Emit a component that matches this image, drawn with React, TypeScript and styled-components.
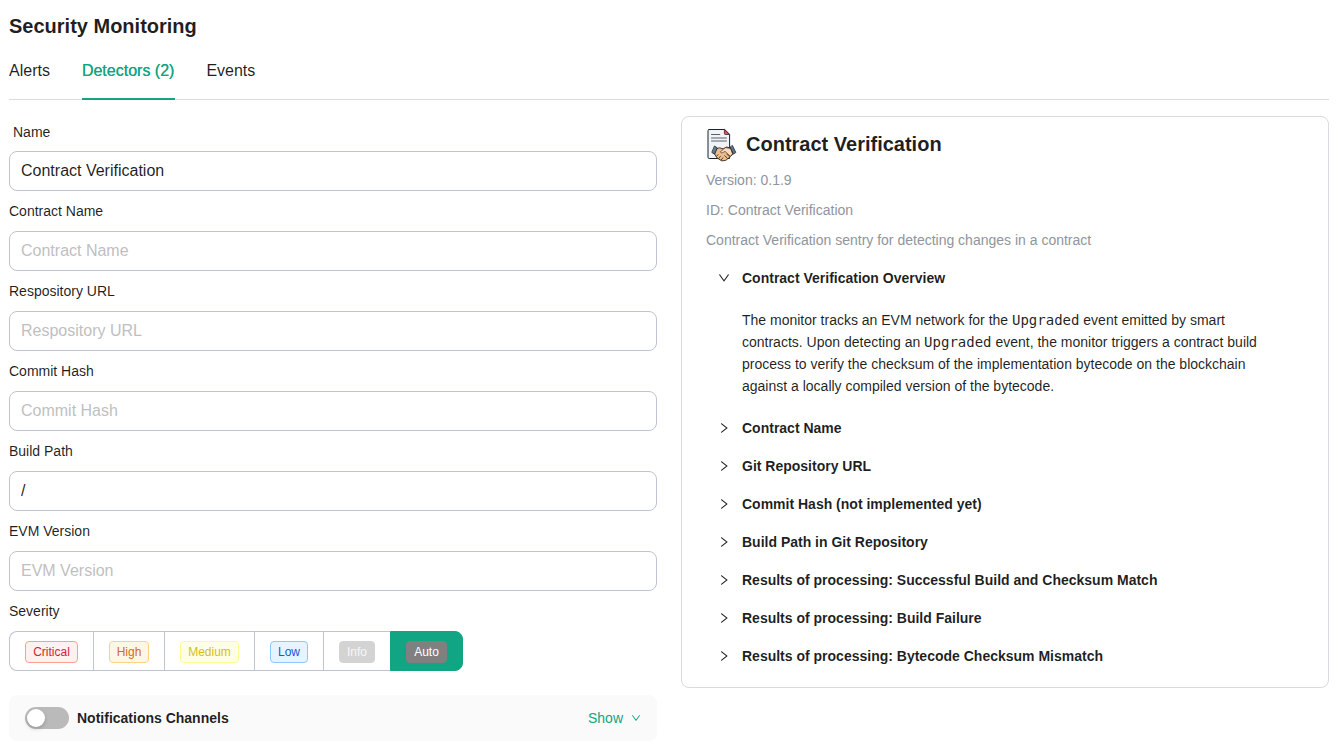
import React, { useState } from "react";
import styled, { createGlobalStyle, css } from "styled-components";

const GlobalStyle = createGlobalStyle`
  *, *::before, *::after { box-sizing: border-box; }
  body {
    margin: 0;
    background: #fff;
    color: rgba(0, 0, 0, 0.88);
    font: 14px/22px "Liberation Sans", Arial, sans-serif;
    overflow: hidden;
  }
  button, input { font-family: inherit; }
`;

const Page = styled.main`
  width: 1340px;
  height: 744px;
  padding: 12px 11px 0 9px;
  overflow: hidden;
`;

const PageTitle = styled.h1`
  margin: 0;
  font-size: 20px;
  line-height: 28px;
  font-weight: 700;
`;

const Tabs = styled.nav`
  display: flex;
  gap: 32px;
  height: 60px;
  margin-bottom: 16px;
  border-bottom: 1px solid #dcdce0;
`;

const Tab = styled.button<{ $active?: boolean }>`
  height: 60px;
  padding: 4px 0 0;
  border: 0;
  border-bottom: 2px solid transparent;
  background: none;
  color: inherit;
  font-size: 16px;
  line-height: 24px;
  ${(p) => p.$active && css`
    padding-right: 0.6px;
    margin-right: -0.6px;
    border-bottom-color: #12a583;
    color: #12a583;
    text-shadow: 0 0 0.25px currentColor;
  `}
`;

const Columns = styled.div`
  display: grid;
  grid-template-columns: 648px 648px;
  gap: 24px;
  align-items: start;
`;

const Form = styled.form`
  display: flex;
  flex-direction: column;
`;

const Label = styled.label<{ $first?: boolean }>`
  height: ${(p) => (p.$first ? "35px" : "40px")};
  padding: ${(p) => (p.$first ? "5px 4px 0" : "9px 0 0")};
`;

const Input = styled.input`
  width: 100%;
  height: 40px;
  padding: 0 11px;
  border: 1px solid #bfc4d4;
  border-radius: 8px;
  background: #fff;
  color: rgba(0, 0, 0, 0.88);
  font-size: 16px;
  outline: none;
  &::placeholder { color: #bfbfbf; opacity: 1; }
`;

const Segments = styled.div`
  display: flex;
  align-self: flex-start;
  height: 40px;
`;

const Segment = styled.button<{ $active?: boolean }>`
  display: flex;
  align-items: center;
  height: 40px;
  padding: 2px 15px 0;
  border: 1px solid #bfc4d4;
  border-right-width: 0;
  background: #fff;
  &:first-child { border-radius: 8px 0 0 8px; }
  &:last-child { border-radius: 0 8px 8px 0; border-right-width: 1px; }
  ${(p) => p.$active && css`
    background: #12a583;
    border-color: #12a583;
  `}
`;

type Tone = { color: string; bg: string; line: string; width: number };

const Tag = styled.span<{ $tone: Tone }>`
  width: ${(p) => p.$tone.width}px;
  height: 22px;
  border: 1px solid ${(p) => p.$tone.line};
  border-radius: 4px;
  background: ${(p) => p.$tone.bg};
  color: ${(p) => p.$tone.color};
  font-size: 12px;
  line-height: 20px;
  text-align: center;
  white-space: nowrap;
`;

const ChannelsBar = styled.section`
  display: flex;
  align-items: center;
  height: 46px;
  margin-top: 24px;
  padding: 0 16px;
  border-radius: 8px;
  background: #fafafa;
`;

const Switch = styled.button`
  display: flex;
  width: 44px;
  height: 22px;
  padding: 2px;
  border: 0;
  border-radius: 11px;
  background: #bababa;
`;

const Knob = styled.span`
  width: 18px;
  height: 18px;
  border-radius: 50%;
  background: #fff;
  box-shadow: 0 2px 4px rgba(0, 35, 11, 0.2);
`;

const ChannelsTitle = styled.strong`
  flex: 1;
  margin-left: 8px;
`;

const ShowLink = styled.button`
  display: flex;
  align-items: center;
  gap: 8px;
  padding: 0;
  border: 0;
  background: none;
  color: #12a583;
  font-size: 14px;
  line-height: 22px;
`;

const Card = styled.aside`
  height: 572px;
  padding: 11px 24px;
  border: 1px solid #d9dae3;
  border-radius: 8px;
`;

const CardHeader = styled.header`
  display: flex;
  align-items: center;
  gap: 8px;
  height: 32px;
  margin-bottom: 9px;
`;

const CardTitle = styled.h2`
  margin: 0;
  font-size: 20px;
  line-height: 28px;
`;

const Meta = styled.p`
  margin: 0 0 8px;
  color: #8f959e;
`;

const Accordion = styled.div`
  display: flex;
  flex-direction: column;
`;

const AccordionHeader = styled.button`
  display: flex;
  align-items: center;
  gap: 12px;
  height: 38px;
  padding: 0 12px;
  border: 0;
  background: none;
  color: inherit;
  font-size: 14px;
  font-weight: 700;
  line-height: 22px;
  text-align: left;
`;

const AccordionBody = styled.p`
  margin: 0;
  padding: 12px 36px 12px 36px;
  height: 112px;
`;

const Code = styled.code`
  font-family: "DejaVu Sans Mono", monospace;
  font-size: 14px;
  line-height: 1;
`;

const Icon = styled.svg<{ $size: number }>`
  flex: none;
  width: ${(p) => p.$size}px;
  height: ${(p) => p.$size}px;
  fill: currentColor;
`;

const DownIcon = ({ size = 12 }: { size?: number }) => (
  <Icon $size={size} viewBox="64 64 896 896">
    <path d="M884 256h-75c-5.1 0-9.9 2.5-12.9 6.6L512 654.2 227.9 262.6c-3-4.1-7.8-6.6-12.9-6.6h-75c-6.5 0-10.3 7.4-6.5 12.7l352.6 486.1c12.8 17.6 39 17.6 51.7 0l352.6-486.1c3.9-5.3.1-12.7-6.4-12.7z" />
  </Icon>
);

const RightIcon = () => (
  <Icon $size={12} viewBox="64 64 896 896">
    <path d="M765.7 486.8L314.9 134.7A7.97 7.97 0 00302 141v77.3c0 4.9 2.3 9.6 6.1 12l360 281.1-360 281.1c-3.9 3-6.1 7.7-6.1 12V883c0 6.7 7.7 10.4 12.9 6.3l450.8-352.1a31.96 31.96 0 000-50.4z" />
  </Icon>
);

const ContractSvg = styled.svg`
  flex: none;
  width: 32px;
  height: 32px;
  overflow: visible;
  stroke-linejoin: round;
  stroke-linecap: round;
`;

const ContractIcon = () => (
  <ContractSvg viewBox="0 0 32 32">
    <path d="M3.2 1.5h15.4l5 5v24H3.2A1.2 1.2 0 0 1 2 29.3V2.7a1.2 1.2 0 0 1 1.2-1.2z" fill="#f1f4f7" stroke="#1b2229" strokeWidth="1" />
    <path d="M18.4 1.6v3.9a1 1 0 0 0 1 1h4z" fill="#ef4a5c" stroke="#40222b" strokeWidth=".8" />
    <path d="M5.5 6.5h8.3M5.5 10h15M5.5 13h15" stroke="#596067" strokeWidth="1" />
    <g transform="matrix(.91 0 0 1.05 2.05 -.9)">
      <path d="M8.6 21l3.8-1.3 4.2 1 3.8-1.7 5 1.1 2 5.6-2.8 2.4-5 3.5-4.4.6-5.3-2.8-2.6-3.6z" fill="#eebd8c" stroke="#2b2522" strokeWidth=".9" />
      <path d="M18.8 19.7l-5.2 3.7c.3 1.5 2.2 1.5 3.6.4l1.5-.6 5.7 4.5 2.5-2.2-1.8-4.8z" fill="#ffd9bf" stroke="#3b2d25" strokeWidth=".7" />
      <path d="M9.3 28l1.7-1.8M11.7 29.9l2-2.2M14.5 31.2l1.8-2M18.3 27.1l3 2.8M20.7 25.7l2.6 2.3" fill="none" stroke="#4a3528" strokeWidth=".9" />
      <path d="M7.4 18.2l2.8 1.6-3 6-2.7-1.5zM26.9 17.8l3.6 6.4-2.7 1.5-3.4-6.3z" fill="#65788a" stroke="#202b35" strokeWidth=".9" />
    </g>
  </ContractSvg>
);

const fields = [
  { label: "Name", value: "Contract Verification" },
  { label: "Contract Name", value: "" },
  { label: "Respository URL", value: "" },
  { label: "Commit Hash", value: "" },
  { label: "Build Path", value: "/" },
  { label: "EVM Version", value: "" },
];

const severities: { name: string; tone: Tone }[] = [
  { name: "Critical", tone: { color: "#cf1f32", bg: "#fff1f0", line: "#ff9c98", width: 53 } },
  { name: "High", tone: { color: "#d46b23", bg: "#fff7e6", line: "#ffd283", width: 40 } },
  { name: "Medium", tone: { color: "#d8bd18", bg: "#feffe6", line: "#fffb8f", width: 59 } },
  { name: "Low", tone: { color: "#1558d6", bg: "#e6f4ff", line: "#8cc8ff", width: 38 } },
  { name: "Info", tone: { color: "#f7f7f7", bg: "#d3d3d3", line: "#d3d3d3", width: 36 } },
  { name: "Auto", tone: { color: "#ffffff", bg: "#808080", line: "#808080", width: 41 } },
];

const sections = [
  "Contract Name",
  "Git Repository URL",
  "Commit Hash (not implemented yet)",
  "Build Path in Git Repository",
  "Results of processing: Successful Build and Checksum Match",
  "Results of processing: Build Failure",
  "Results of processing: Bytecode Checksum Mismatch",
];

export default function App() {
  const [severity, setSeverity] = useState("Auto");

  return (
    <Page>
      <GlobalStyle />
      <PageTitle>Security Monitoring</PageTitle>
      <Tabs>
        <Tab>Alerts</Tab>
        <Tab $active>Detectors (2)</Tab>
        <Tab>Events</Tab>
      </Tabs>
      <Columns>
        <Form onSubmit={(e) => e.preventDefault()}>
          {fields.map((f, i) => (
            <React.Fragment key={f.label}>
              <Label $first={i === 0} htmlFor={f.label}>{f.label}</Label>
              <Input id={f.label} defaultValue={f.value} placeholder={f.label} />
            </React.Fragment>
          ))}
          <Label as="div">Severity</Label>
          <Segments>
            {severities.map((s) => (
              <Segment key={s.name} type="button" $active={s.name === severity} onClick={() => setSeverity(s.name)}>
                <Tag $tone={s.tone}>{s.name}</Tag>
              </Segment>
            ))}
          </Segments>
          <ChannelsBar>
            <Switch type="button" role="switch" aria-checked={false}>
              <Knob />
            </Switch>
            <ChannelsTitle>Notifications Channels</ChannelsTitle>
            <ShowLink type="button">
              Show
              <DownIcon size={10} />
            </ShowLink>
          </ChannelsBar>
        </Form>
        <Card>
          <CardHeader>
            <ContractIcon />
            <CardTitle>Contract Verification</CardTitle>
          </CardHeader>
          <Meta>Version: 0.1.9</Meta>
          <Meta>ID: Contract Verification</Meta>
          <Meta>Contract Verification sentry for detecting changes in a contract</Meta>
          <Accordion>
            <AccordionHeader><DownIcon />Contract Verification Overview</AccordionHeader>
            <AccordionBody>
              The monitor tracks an EVM network for the <Code>Upgraded</Code> event emitted by smart
              contracts. Upon detecting an <Code>Upgraded</Code> event, the monitor triggers a contract build
              process to verify the checksum of the implementation bytecode on the blockchain
              against a locally compiled version of the bytecode.
            </AccordionBody>
            {sections.map((s) => (
              <AccordionHeader key={s}><RightIcon />{s}</AccordionHeader>
            ))}
          </Accordion>
        </Card>
      </Columns>
    </Page>
  );
}
